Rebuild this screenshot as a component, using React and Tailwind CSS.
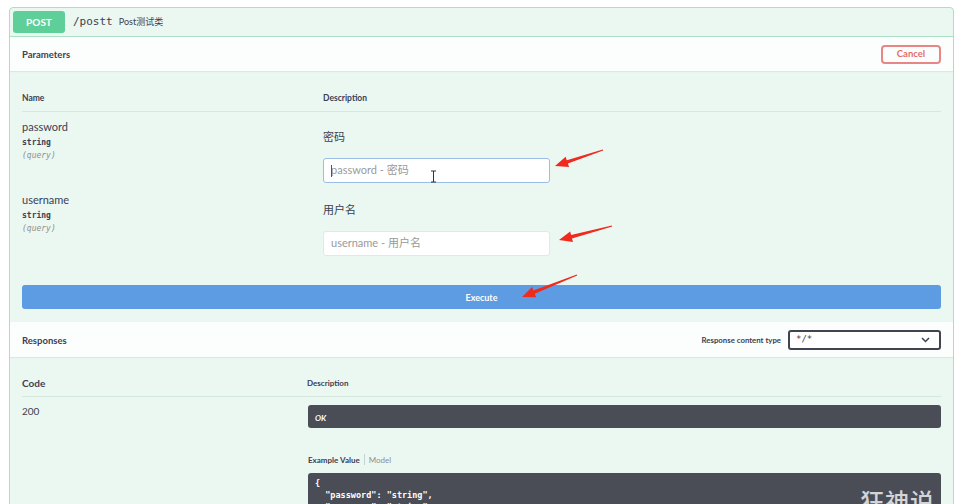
import React from "react";

const sans = { fontFamily: "Lato, 'Noto Sans CJK SC', sans-serif" };
const mono = { fontFamily: "'DejaVu Sans Mono', 'Liberation Mono', monospace" };

function arrow(tx, ty, sx, sy) {
  const dx = tx - sx, dy = ty - sy;
  const len = Math.hypot(dx, dy);
  const ux = dx / len, uy = dy / len;
  const px = -uy, py = ux;
  const hl = 13, hw = 5.5;
  const bx = tx - ux * hl, by = ty - uy * hl;
  const pts = [
    [sx + px * 0.6, sy + py * 0.6],
    [bx + px * 1.8, by + py * 1.8],
    [bx + px * hw, by + py * hw],
    [tx, ty],
    [bx - px * hw, by - py * hw],
    [bx - px * 1.8, by - py * 1.8],
    [sx - px * 0.6, sy - py * 0.6],
  ];
  return pts.map((p) => p.map((v) => v.toFixed(1)).join(",")).join(" ");
}

function ParamRow({ name, label, placeholder, focused }) {
  return (
    <div className="flex h-[73px]">
      <div className="w-[301px] pt-[8px] text-[#3b4151]">
        <div className="text-[11px] leading-[14px]" style={sans}>{name}</div>
        <div className="text-[8px] leading-[10px] font-bold mt-[4px]" style={mono}>string</div>
        <div className="text-[8px] leading-[10px] italic text-[#909090] mt-[3px]" style={mono}>(query)</div>
      </div>
      <div className="flex-1 pt-[18px]">
        <div className="text-[11px] leading-[14px] text-[#3b4151]" style={sans}>{label}</div>
        <div
          className={
            "mt-[14px] w-[227px] h-[25px] rounded-[3px] bg-white flex items-center pl-[7px] text-[11px] text-[#9a9a9a] relative " +
            (focused ? "border border-[#9cbde6]" : "border border-[#e3e8e6]")
          }
          style={sans}
        >
          {focused && <span className="absolute left-[7px] top-[6px] w-[1px] h-[12px] bg-[#555]" />}
          {placeholder}
        </div>
      </div>
    </div>
  );
}

export default function App() {
  return (
    <div className="relative w-[962px] h-[504px] overflow-hidden bg-white pt-[7px] pl-[9px] pr-[8px]" style={sans}>
      <div className="border border-[#a9e0c6] rounded-[4px] bg-[#ebf7f1] h-[600px]">
        {/* header */}
        <div className="h-[29px] flex items-center pl-[3px] border-b border-[#a9e0c6]">
          <div className="w-[52px] h-[22px] rounded-[3px] bg-[#5ecf98] text-white font-bold text-[10px] flex items-center justify-center">
            POST
          </div>
          <div className="ml-[8px] text-[11px] text-[#3b4151]" style={mono}>/postt</div>
          <div className="ml-[6px] text-[9px] text-[#3b4151]">Post测试类</div>
        </div>
        {/* parameters bar */}
        <div className="h-[34px] bg-[#fcfefd] flex items-center justify-between pl-[12px] pr-[12px] shadow-[0_1px_1px_rgba(0,0,0,0.06)]">
          <div className="text-[9.5px] font-bold text-[#3b4151] mt-[3px]">Parameters</div>
          <div className="w-[60px] h-[19px] border-2 border-[#e88686] rounded-[4px] flex items-center justify-center text-[9.5px] font-bold text-[#e46c6c]">
            Cancel
          </div>
        </div>
        {/* params table */}
        <div className="px-[12px]">
          <div className="flex pt-[21px] pb-[7px] border-b border-[#d4e8de] text-[8.5px] leading-[12px] font-bold text-[#3b4151]">
            <div className="w-[301px]">Name</div>
            <div>Description</div>
          </div>
          <ParamRow name="password" label="密码" placeholder="password - 密码" focused />
          <ParamRow name="username" label="用户名" placeholder="username - 用户名" />
          <div className="mt-[27px] h-[24px] rounded-[3px] bg-[#5d9be2] flex items-center justify-center text-white text-[9px] font-bold">
            <span className="mt-[1px]">Execute</span>
          </div>
        </div>
        {/* responses bar */}
        <div className="mt-[13px] h-[35px] bg-[#fcfefd] flex items-center justify-between pl-[12px] pr-[12px] shadow-[0_1px_1px_rgba(0,0,0,0.06)]">
          <div className="text-[9.5px] font-bold text-[#3b4151] mt-[3px]">Responses</div>
          <div className="flex items-center">
            <div className="text-[7.8px] font-bold text-[#3b4151] mr-[7px] mt-[2px]">Response content type</div>
            <div className="w-[153px] h-[20px] border-2 border-[#41444e] rounded-[3px] bg-white flex items-center justify-between pl-[6px] pr-[9px] text-[9px] text-[#3b4151]">
              <span style={mono}>*/*</span>
              <svg width="9" height="6" viewBox="0 0 9 6">
                <path d="M1 1 L4.5 4.5 L8 1" fill="none" stroke="#3b4151" strokeWidth="1.5" />
              </svg>
            </div>
          </div>
        </div>
        {/* responses table */}
        <div className="px-[12px]">
          <div className="flex items-center pt-[20px] pb-[7px] border-b border-[#d4e8de] leading-[12px] text-[#3b4151] font-bold">
            <div className="w-[285px] text-[10px]">Code</div>
            <div className="text-[8px]">Description</div>
          </div>
          <div className="flex pt-[8px]">
            <div className="w-[286px] text-[10px] leading-[12px] text-[#3b4151]">200</div>
            <div className="flex-1">
              <div className="h-[23px] rounded-[3px] bg-[#4a4d56] flex items-center pl-[7px] text-white text-[8px] font-bold italic">
                <span className="mt-[2px]">OK</span>
              </div>
              <div className="mt-[26px] flex items-center text-[8px] leading-[10px]">
                <span className="font-bold text-[#3b4151]">Example Value</span>
                <span className="mx-[4px] w-[1px] h-[11px] bg-[#c9d2ce]" />
                <span className="text-[#8a8f96]">Model</span>
              </div>
              <div className="mt-[8px] h-[60px] rounded-[3px] bg-[#4a4d56] pl-[7px] pt-[4px] text-white text-[8.5px] leading-[12px] font-bold whitespace-pre" style={mono}>
                {"{\n  \"password\": \"string\",\n  \"username\": \"string\"\n}"}
              </div>
            </div>
          </div>
        </div>
      </div>

      {/* watermark */}
      <div
        className="absolute left-[860px] top-[486px] text-[24px] leading-[30px] font-medium text-[#d3d4d6] tracking-[1px]"
        style={{ fontFamily: "'Noto Sans CJK SC', sans-serif" }}
      >
        狂神说
      </div>

      {/* annotation arrows and cursor */}
      <svg className="absolute left-0 top-0 pointer-events-none" width="962" height="504">
        <polygon points={arrow(555, 166, 603, 150)} fill="#f02a1e" />
        <polygon points={arrow(559, 240, 612, 226)} fill="#f02a1e" />
        <polygon points={arrow(522, 297, 577, 275)} fill="#f02a1e" />
        <g stroke="#333" strokeWidth="1" fill="none">
          <path d="M433.5 171 V182" />
          <path d="M431 171 H436" />
          <path d="M431 182 H436" />
        </g>
      </svg>
    </div>
  );
}
